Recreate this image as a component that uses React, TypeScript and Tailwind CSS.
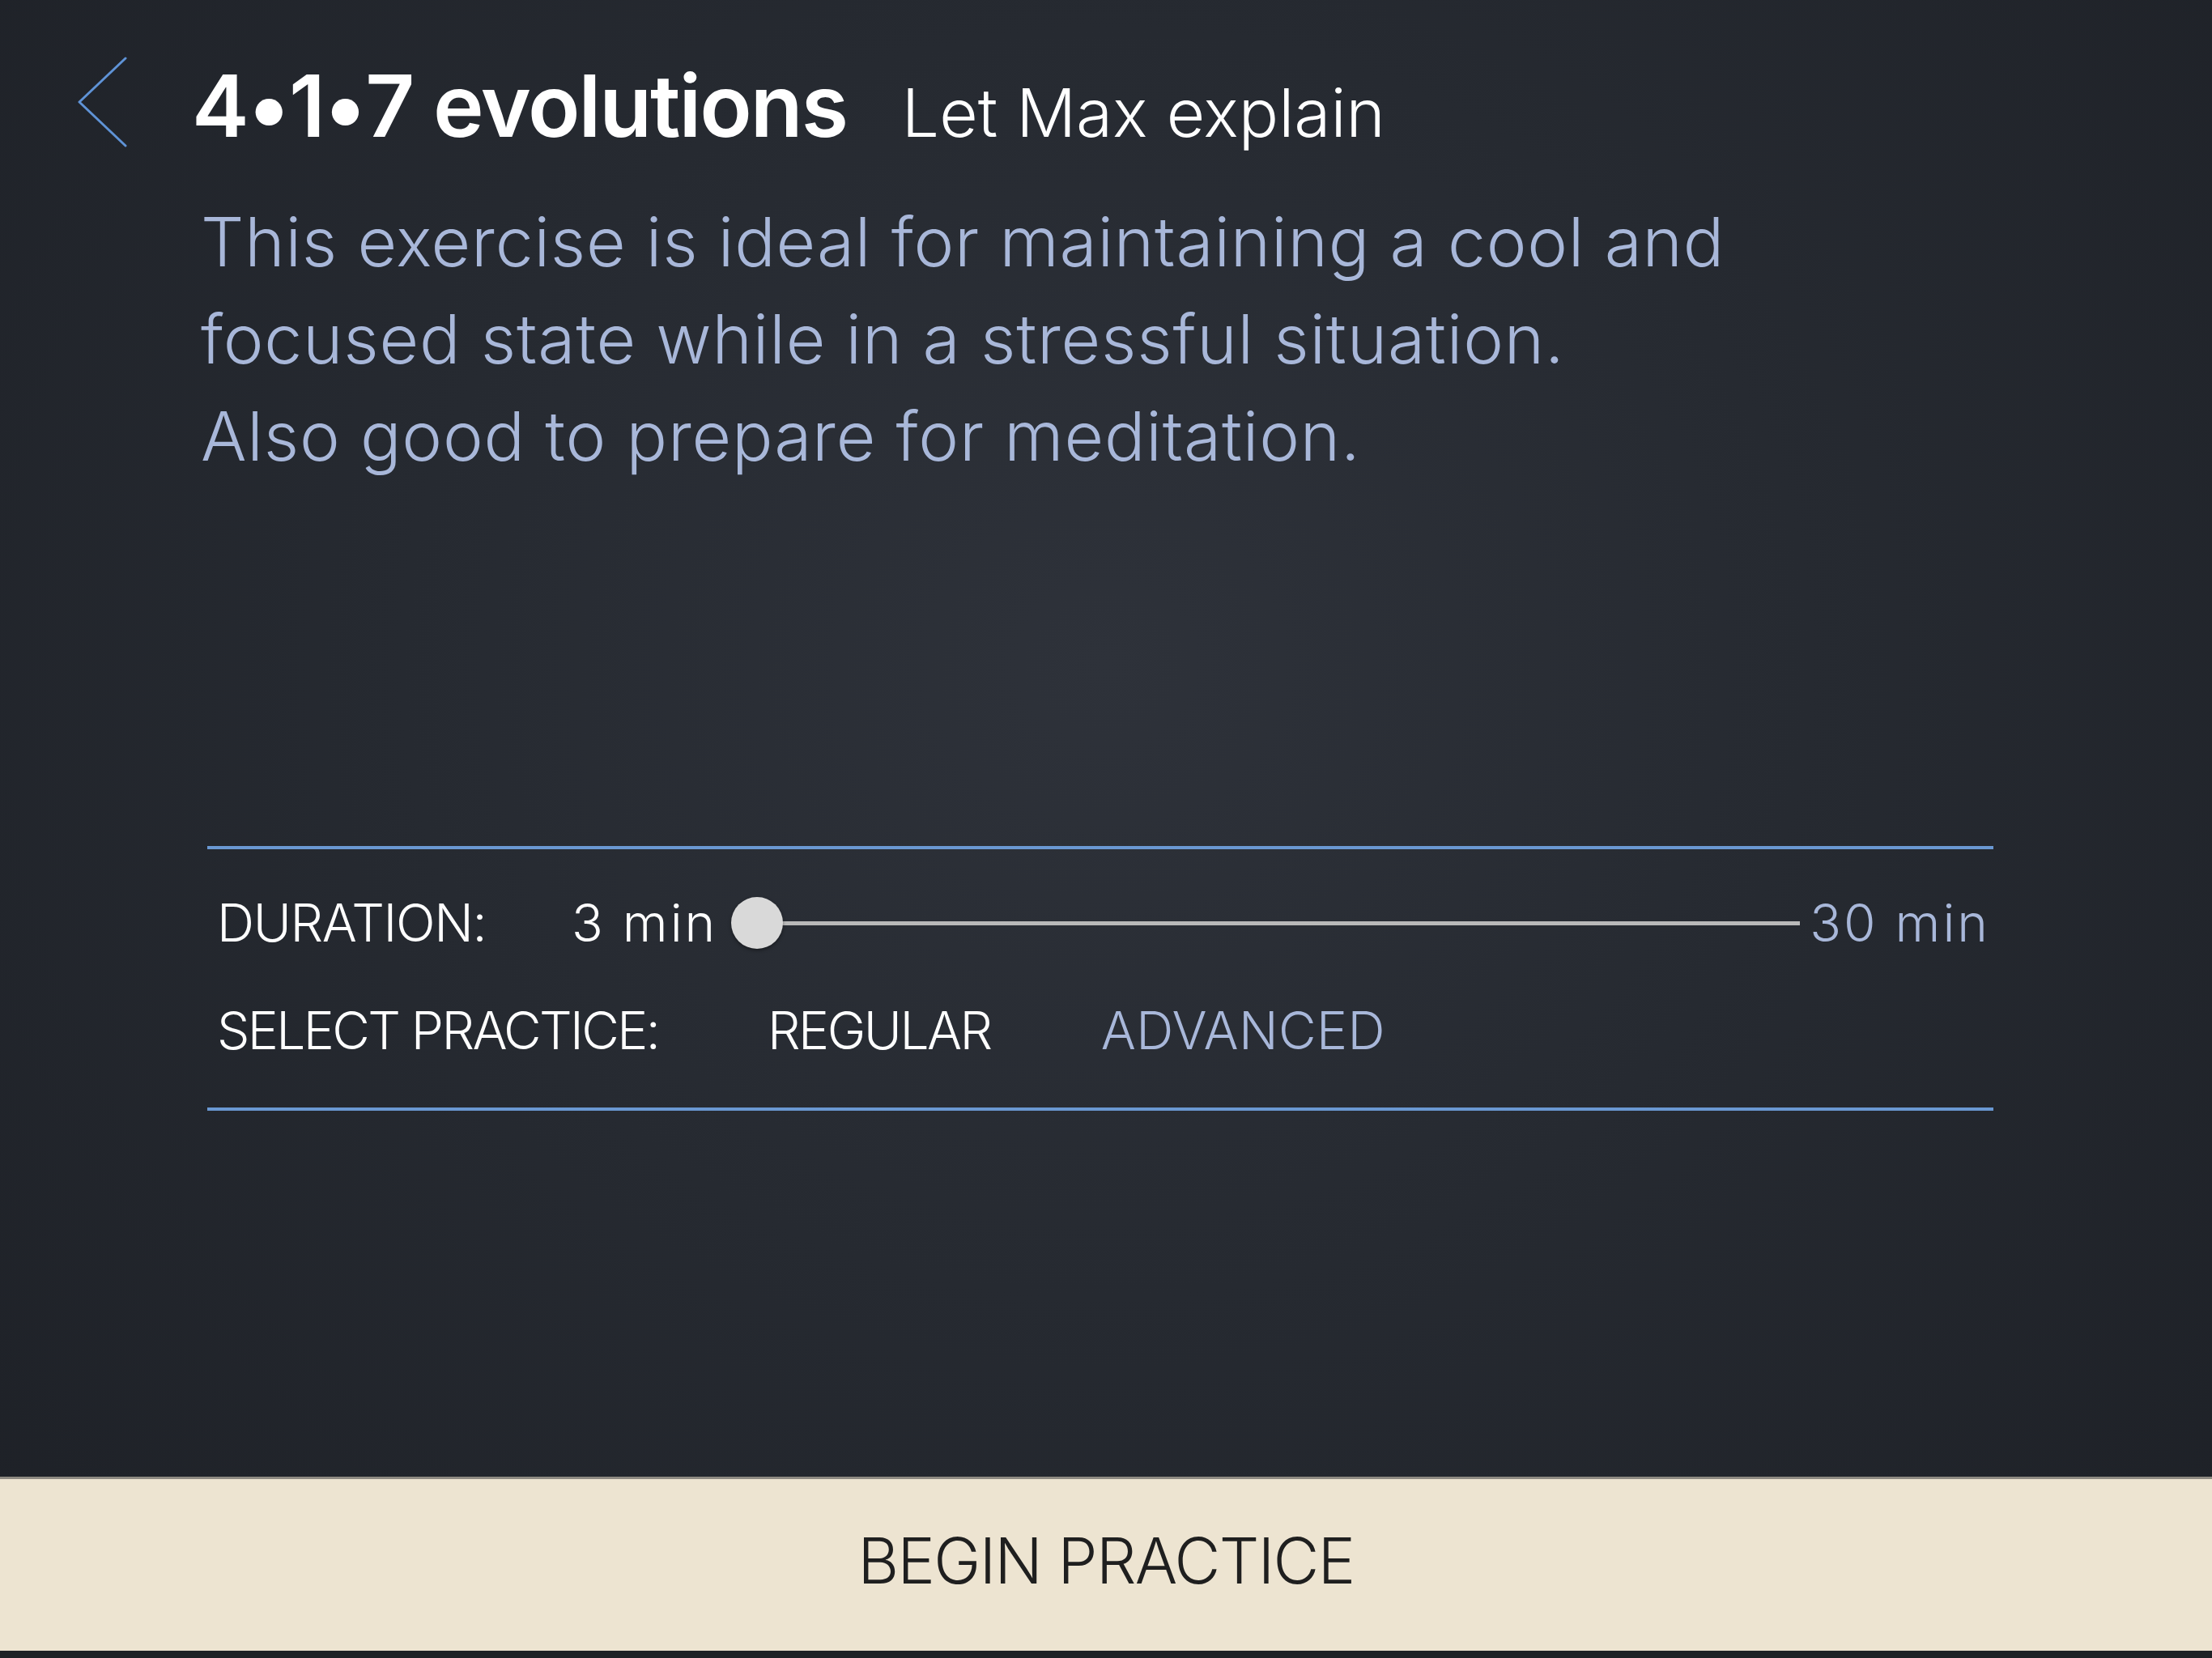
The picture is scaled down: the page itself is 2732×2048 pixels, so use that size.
const font = { fontFamily: "Inter, 'Open Sans', sans-serif" };

const BackButton = () => (
  <svg className="mt-[70px] h-[112px] w-[62px] shrink-0" viewBox="0 0 62 112" fill="none">
    <path d="M60 2 L3 56 L60 110" stroke="#5f93d6" strokeWidth="3" strokeLinecap="round" strokeLinejoin="round" />
  </svg>
);

const DurationSlider = ({ min, max, value }: { min: number; max: number; value: number }) => {
  const pct = ((value - min) / (max - min)) * 100;
  return (
    <div className="flex h-[64px] flex-1 items-center">
      <div className="relative ml-[17px] h-[64px] flex-1">
        <div className="absolute left-[31px] right-0 top-[30px] h-[5px] bg-[#b9b9b9]" />
        <div
          className="absolute top-0 h-[64px] w-[64px] rounded-full bg-[#d9d9d9] shadow-[0_2px_4px_rgba(0,0,0,0.4)]"
          style={{ left: `calc(${pct}% * 0.95)` }}
        />
      </div>
    </div>
  );
};

export default function App() {
  const practice = "regular";

  return (
    <div
      className="flex h-[2048px] w-full flex-col overflow-hidden bg-[radial-gradient(ellipse_at_50%_40%,#2e323a_0%,#262a31_45%,#1d2026_100%)] text-white"
      style={font}
    >
      <main className="flex-1">
        <header className="flex items-start pl-[95px]">
          <BackButton />
          <div className="ml-[80px] mt-[78px] flex items-baseline">
            <h1 className="text-[106px] font-semibold leading-none tracking-[-2px] text-white">4•1•7 evolutions</h1>
            <span className="ml-[68px] text-[82px] font-light leading-none text-white">Let Max explain</span>
          </div>
        </header>

        <p className="ml-[248px] mt-[55px] w-[2100px] text-[84px] font-light leading-[120px] tracking-[0.8px] text-[#a8b7d9]">
          This exercise is ideal for maintaining a cool and
          <br />
          focused state while in a stressful situation.
          <br />
          Also good to prepare for meditation.
        </p>

        <section className="ml-[256px] mr-[270px] mt-[446px] border-y-[4px] border-[#6a98d2] pb-[63px] pl-[12px] pr-[4px] pt-[59px]">
          <div className="flex items-center text-[64px] font-light leading-none">
            <span className="w-[438px] shrink-0 tracking-[-1.3px] text-white">DURATION:</span>
            <span className="tracking-[3px] text-white">3 min</span>
            <DurationSlider min={3} max={30} value={3} />
            <span className="ml-[12px] tracking-[3px] text-[#a8b7d9]">30 min</span>
          </div>
          <div className="mt-[69px] flex items-center text-[64px] font-light leading-none">
            <span className="w-[680px] shrink-0 tracking-[-2.6px] text-white">SELECT PRACTICE:</span>
            <button className={`tracking-[-2.5px] ${practice === "regular" ? "text-white" : "text-[#a8b7d9]"}`}>REGULAR</button>
            <button className="ml-[136px] tracking-[0.4px] text-[#a8b7d9]">ADVANCED</button>
          </div>
        </section>
      </main>

      <footer className="border-t-[3px] border-[#8e8a82] bg-[#ede4d1]">
        <button className="flex h-[212px] w-full items-center justify-center pb-[12px] text-[78px] font-light tracking-[-1.6px] text-[#1f1f1f]">
          BEGIN PRACTICE
        </button>
      </footer>
      <div className="h-[9px] bg-[#1e2125]" />
    </div>
  );
}
